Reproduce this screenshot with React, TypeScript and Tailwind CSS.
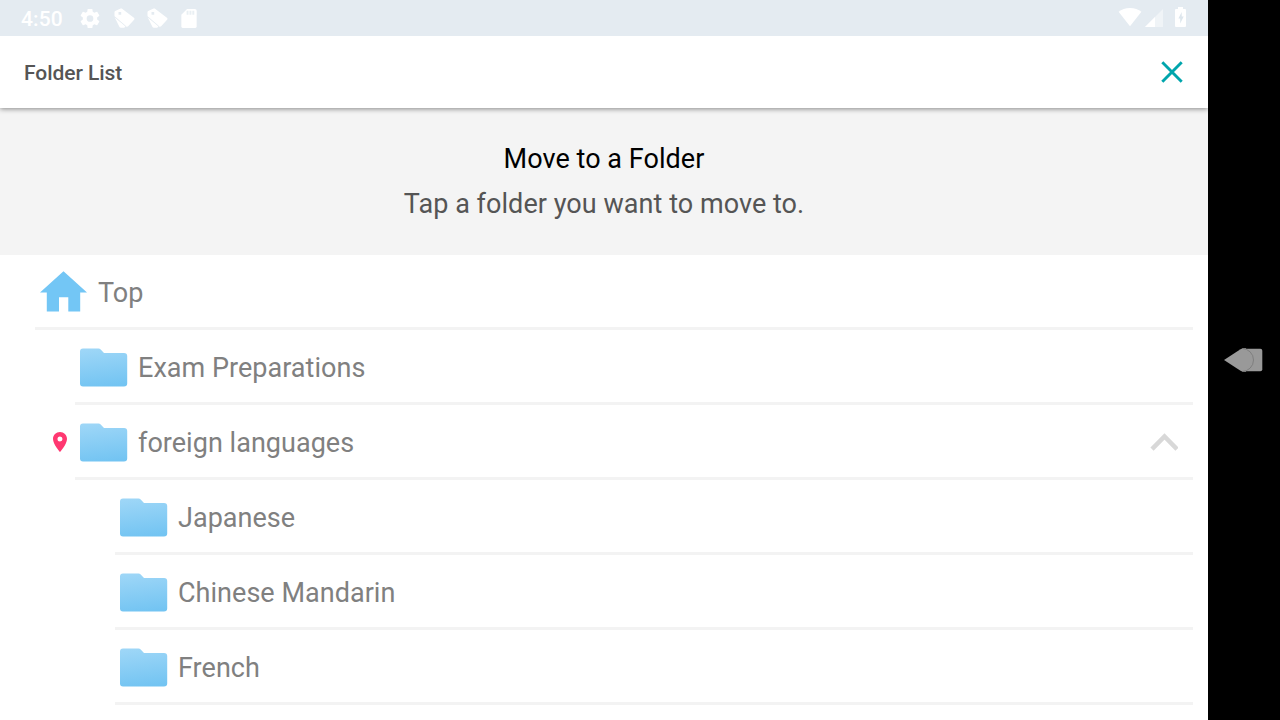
import type { ReactNode } from 'react'

interface FolderItem {
  name: string
  level: number
  current?: boolean
}

const folders: FolderItem[] = [
  { name: 'Top', level: 0 },
  { name: 'Exam Preparations', level: 1 },
  { name: 'foreign languages', level: 1, current: true },
  { name: 'Japanese', level: 2 },
  { name: 'Chinese Mandarin', level: 2 },
  { name: 'French', level: 2 },
]

const indents = ['pl-[35px]', 'pl-[75px]', 'pl-[115px]']

function TagIcon() {
  return (
    <svg className="w-[21px] h-5" viewBox="0 0 21 20" fill="#fff">
      <path d="M1.200 3 6.600.6c.7-.3 1.200-.2 1.800.3l11.500 8.900c.7.6.8 1.200.2 1.900l-6 6.600c-.6.6-1.200.6-1.900.1L1.100 8.800c-.5-.4-.6-.8-.6-1.400V4.100c0-.6.200-.9.7-1.100zM4.500 4v2.700h2.700V4z" fillRule="evenodd" />
      <path d="M.7 9.200 11.500 18.400 10.500 19.400c-.3.3-.6.4-1 .4H6.800c-.6 0-1-.2-1.300-.8z" />
      <path d="M1 9 11.800 18.200" stroke="#e4ebf1" strokeWidth=".5" />
    </svg>
  )
}

function StatusBar() {
  return (
    <div className="relative z-10 flex h-9 shrink-0 items-center justify-between bg-[#e4ebf1] pl-[21px] pr-[22px] pt-px text-white">
      <div className="flex items-center">
        <span className="w-[57px] text-[21px] leading-6 font-medium tracking-[0.1px]">4:50</span>
        <svg className="size-6 pb-px" viewBox="0 0 24 24" fill="#fff">
          <path d="M19.430 12.980c.04-.32.07-.64.07-.98s-.03-.66-.07-.98l2.110-1.650c.19-.15.24-.42.12-.64l-2-3.460c-.12-.22-.39-.3-.61-.22l-2.490 1c-.52-.4-1.080-.73-1.690-.98l-.38-2.650C14.460 2.180 14.250 2 14 2h-4c-.25 0-.46.18-.49.42l-.38 2.650c-.61.25-1.170.59-1.690.98l-2.490-1c-.23-.09-.49 0-.61.22l-2 3.460c-.13.22-.07.49.12.64l2.110 1.650c-.04.32-.07.65-.07.98s.03.66.07.98l-2.110 1.650c-.19.15-.24.42-.12.64l2 3.460c.12.22.39.3.61.22l2.490-1c.52.4 1.080.73 1.690.98l.38 2.650c.03.24.24.42.49.42h4c.25 0 .46-.18.49-.42l.38-2.650c.61-.25 1.170-.59 1.690-.98l2.490 1c.23.09.49 0 .61-.22l2-3.460c.12-.22.07-.49-.12-.64zM12 15.500a3.500 3.500 0 1 1 0-7 3.500 3.500 0 0 1 0 7z" />
        </svg>
        <div className="ml-3 flex gap-3 pb-px">
          <TagIcon />
          <TagIcon />
        </div>
        <svg className="ml-[9px] size-6 pb-px" viewBox="0 0 24 24" fill="#fff">
          <path d="M18 2h-8L4 8v12a2 2 0 0 0 2 2h12a2 2 0 0 0 2-2V4a2 2 0 0 0-2-2z" />
          <path d="M9.500 4h2v4h-2zm3 0h2v4h-2zm3 0h2v4h-2z" fill="#e9eff3" />
        </svg>
      </div>
      <div className="flex items-center pb-[3px]">
        <svg className="h-5 w-6" viewBox="0 0 24 20" fill="#fff">
          <path d="M12 19.300.6 4.800C3.500 2.300 7.500 1 12 1s8.500 1.300 11.400 3.800z" />
        </svg>
        <svg className="ml-[3px] mt-[2px] size-[18px]" viewBox="0 0 18 18">
          <path d="M0 18 18 0v18z" fill="#f0f4f7" />
          <path d="M0 18 10 8v10z" fill="#fff" />
        </svg>
        <svg className="ml-3 h-5 w-[11px]" viewBox="0 0 11 20">
          <path d="M3 2V0h5v2h2q1 0 1 1v16q0 1-1 1H1q-1 0-1-1V3q0-1 1-1z" fill="#fff" />
          <path d="M6.700 5 3.400 11.500H5.200v5L8.700 9.500H6.700z" fill="#dde6ed" />
        </svg>
      </div>
    </div>
  )
}

function HomeIcon() {
  return (
    <svg className="h-[41px] w-12" viewBox="0 0 48 41">
      <path d="M23.500.2 47 21.500h-6.800V40.600H28.300V26.200h-9.300V40.600H6.800V21.500H0z" fill="#73c6f5" />
    </svg>
  )
}

function FolderIcon() {
  return (
    <svg className="mt-[2px] h-[39px] w-12" viewBox="0 0 48 39">
      <defs>
        <linearGradient id="folder" x1="0.4" y1="0" x2="0.55" y2="1">
          <stop offset="0" stopColor="#9dd6f7" />
          <stop offset="1" stopColor="#73c4f2" />
        </linearGradient>
      </defs>
      <path d="M3 .4h15.500q1.300 0 2.200 1L24 5h20q3.200 0 3.200 3v27.500q0 3-3.200 3H3q-3 0-3-3V3.400Q0 .4 3 .4z" fill="url(#folder)" />
    </svg>
  )
}

function FolderRow({ item, icon }: { item: FolderItem; icon: ReactNode }) {
  return (
    <li className={`relative pr-[15px] ${indents[item.level]}`}>
      {item.current && (
        <svg className="absolute left-[53px] top-[27px] h-5 w-[14px]" viewBox="0 0 14 20">
          <path d="M7 0C3.100 0 0 3.100 0 7c0 5.200 7 13 7 13s7-7.800 7-13c0-3.900-3.100-7-7-7zm0 9.500a2.500 2.500 0 1 1 0-5 2.500 2.500 0 0 1 0 5z" fill="#ff3871" />
        </svg>
      )}
      <div className="flex h-[75px] items-center border-b-[3px] border-[#f3f3f3] pl-[5px] pr-[14px]">
        {icon}
        <span className="ml-[10px] mt-1 flex-1 text-[27px] leading-8 tracking-[0.03px] text-[#808080]">{item.name}</span>
        {item.current && (
          <svg className="mt-px mr-px h-[18px] w-7" viewBox="0 0 28 18" fill="none">
            <path d="M2 16.200 14.500 3.500 27 16.200" stroke="#d8d8d8" strokeWidth="4.500" />
          </svg>
        )}
      </div>
    </li>
  )
}

export default function App() {
  return (
    <div className="flex h-screen w-screen overflow-hidden bg-black font-['Roboto',sans-serif]">
      <div className="flex w-[1208px] flex-col overflow-hidden bg-white">
        <StatusBar />
        <header className="relative flex h-[72px] shrink-0 items-center justify-between bg-white pl-6 pr-[25px] shadow-[0_1px_5px_rgba(0,0,0,0.45)]">
          <h1 className="pt-[3px] text-[21px] font-medium tracking-[-0.05px] text-[#555]">Folder List</h1>
          <svg className="size-[22px]" viewBox="0 0 22 22" fill="none">
            <path d="m1.300 1.300 19.400 19.400m0-19.400L1.300 20.700" stroke="#00a5ac" strokeWidth="2.900" />
          </svg>
        </header>
        <section className="h-[147px] shrink-0 bg-[#f4f4f4] pt-[29px] text-center text-[27px] leading-[45px] tracking-[0.05px]">
          <h2 className="text-black">Move to a Folder</h2>
          <p className="text-[#555]">Tap a folder you want to move to.</p>
        </section>
        <ul>
          {folders.map((item) => (
            <FolderRow key={item.name} item={item} icon={item.level === 0 ? <HomeIcon /> : <FolderIcon />} />
          ))}
        </ul>
      </div>
      <nav className="flex flex-1 items-center pl-4">
        <svg className="h-6 w-[39px]" viewBox="0 0 39 24">
          <rect x="17" y=".7" width="21.300" height="22.600" rx="2" fill="#999" />
          <path d="M0 12 16.500 1.200Q18 .3 20 .3h2v23.400h-2q-2 0-3.500-.9z" fill="#999" />
          <path d="M18 .5a11.500 11.500 0 0 1 0 23" fill="none" stroke="#777" strokeWidth=".8" />
        </svg>
      </nav>
    </div>
  )
}
